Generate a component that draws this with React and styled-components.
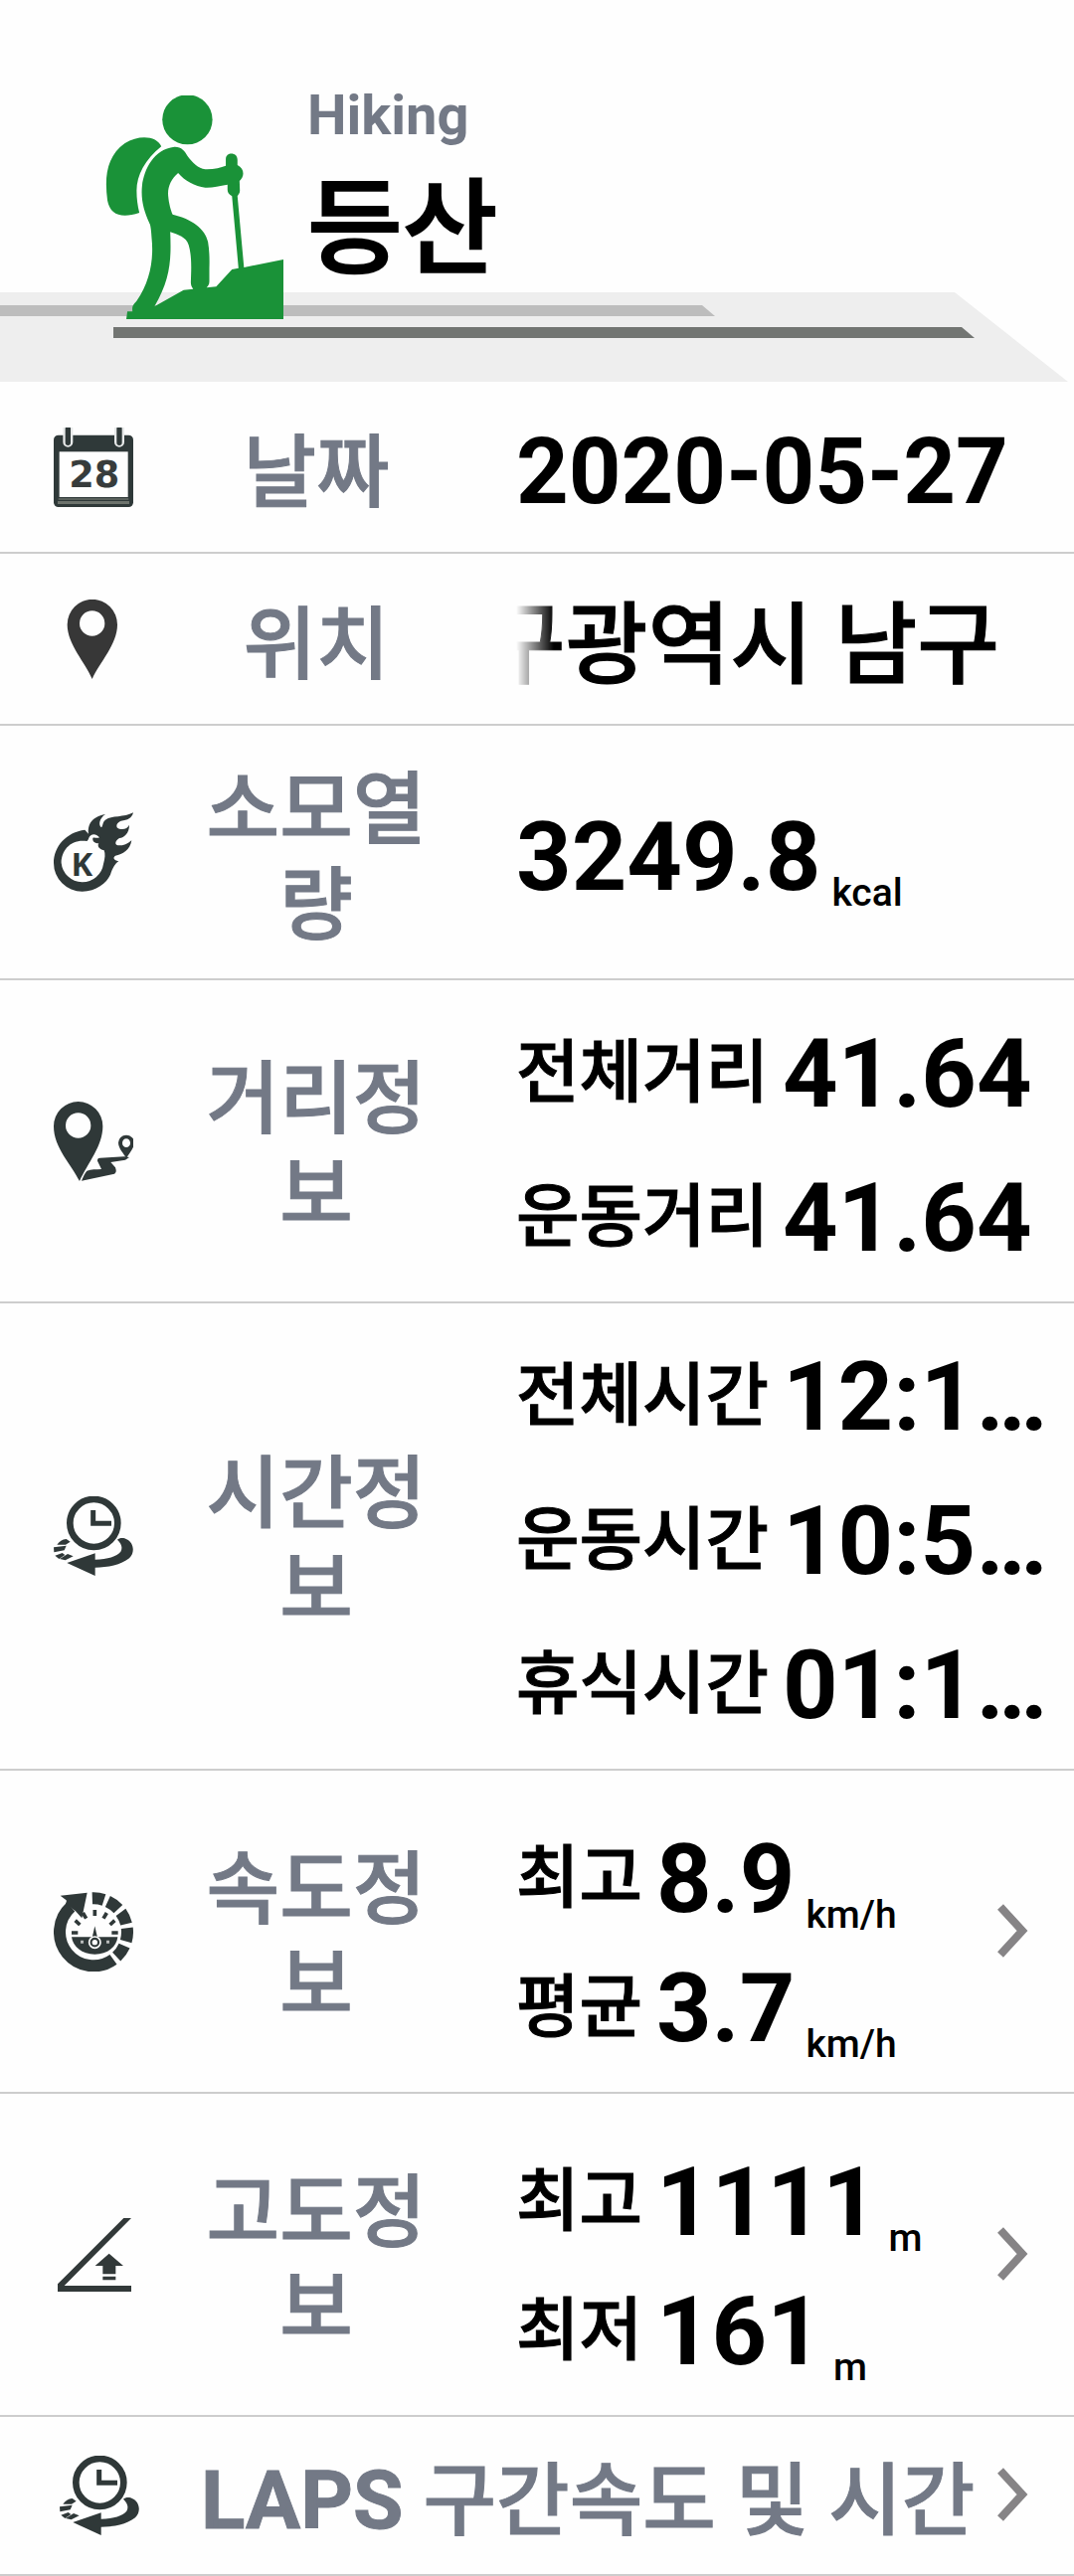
import React from 'react'
import styled, { createGlobalStyle } from 'styled-components'

const GlobalStyle = createGlobalStyle`
  * {
    box-sizing: border-box;
  }
  body {
    margin: 0;
    background: #fefefe;
    color: #000;
    font-family: Roboto, 'Noto Sans CJK KR', sans-serif;
  }
`;

// ---------- icons ----------

const HikerIcon = () => (
  <svg width='179' height='225' viewBox='309 108 519 675' preserveAspectRatio='none' fill='#1a9238' aria-hidden='true'>
    <ellipse cx='548' cy='181' rx='73' ry='75' />
    <path d='M472 262C425 300 400 350 400 395C400 420 403 440 408 462C355 480 323 468 315 425C305 350 315 290 365 253C410 224 460 232 472 262Z' />
    <path
      fillRule='evenodd'
      d='M510 263C530 262 540 275 548 290C562 310 580 328 600 331C625 332 645 325 660 320V300C660 278 694 278 694 302V318C715 330 715 352 700 366L701 395C701 403 697 405 694 412L713 627L828 603V783H370L373 760H388C385 740 395 735 400 728C440 670 450 600 444 540C443 520 441 500 438 495C420 455 412 420 416 380C422 330 450 270 510 263Z
        M521 342C500 360 490 385 492 410C494 435 500 455 505 467C560 480 600 510 608 550C612 575 613 600 612 630V670C612 680 607 684 604 688L632 685L678 633L697 629L678 412C668 405 665 400 665 392V377C640 382 620 387 600 386C570 383 540 365 521 342Z
        M498 520C501 600 500 660 452 745L537 695L565 692C560 685 558 680 558 672C560 620 560 590 552 560C545 535 520 528 498 520Z'
    />
  </svg>
);

const CalendarIcon = () => (
  <svg width='80' height='80' viewBox='0 0 240 240' aria-hidden='true'>
    <rect x='0' y='23' width='240' height='217' rx='14' fill='#2f3939' />
    <rect x='17' y='73' width='207' height='137' fill='#fefefe' />
    <rect x='14' y='214' width='212' height='4' fill='#6d736d' />
    <rect x='12' y='222' width='216' height='9' fill='#6d736d' />
    <path d='M28-10V44a15 15 0 0 0 30 0V-10ZM183-10V44a15 15 0 0 0 30 0V-10Z' fill='#e8eaea' />
    <path d='M43 4V46M198 4V46' stroke='#2f3939' strokeWidth='16' strokeLinecap='round' />
    <text x='122' y='179' textAnchor='middle' fontFamily='DejaVu Sans' fontWeight='700' fontSize='110' fill='#373c3c'>28</text>
  </svg>
);

const PinIcon = () => (
  <svg width='80' height='80' viewBox='0 0 240 240' fill='#373737' aria-hidden='true'>
    <path fillRule='evenodd' d='M116 240C95 190 41 135 41 76A75 76 0 0 1 192 76C192 135 139 190 116 240ZM116 34a38 38 0 1 0 0 76a38 38 0 1 0 0-76Z' />
  </svg>
);

const CalorieIcon = () => (
  <svg width='80' height='80' viewBox='72 112 240 240' fill='#2f3838' aria-hidden='true'>
    <path
      fillRule='evenodd'
      d='M166 165C110 172 72 215 72 265A86 86 0 0 0 158 351C200 350 232 325 243 300C250 280 256 268 268 260C252 256 250 248 258 243C280 240 303 225 307 197C298 204 288 213 270 212C255 212 255 200 270 190C285 188 300 175 300 150C295 160 285 165 270 162C256 158 262 142 275 138C295 136 308 130 312 113C285 128 245 122 230 134C218 142 222 152 216 158C206 150 210 130 228 118C185 126 174 150 177 177Z
        M172 199C125 192 95 225 95 265A64 64 0 0 0 222 268C227 250 228 238 224 227C207 224 203 212 208 206C197 206 188 200 190 190C193 186 202 192 210 188C200 176 190 177 184 182C176 188 178 196 172 199Z'
    />
    <text x='157' y='303' textAnchor='middle' fontFamily='Noto Sans' fontWeight='700' fontSize='98'>K</text>
  </svg>
);

const RouteIcon = () => (
  <svg width='80' height='80' viewBox='72 141 240 240' fill='#2f3838' aria-hidden='true'>
    <path fillRule='evenodd' d='M150 381C125 330 72 280 72 215A74 74 0 0 1 220 215C220 275 175 325 150 381ZM146 175a38 38 0 1 0 0 76a38 38 0 1 0 0-76Z' />
    <path fillRule='evenodd' d='M291 313C284 298 267 283 267 265A24 23 0 0 1 315 265C315 283 298 298 291 313ZM291 253a12 13 0 1 0 0 26a12 13 0 1 0 0-26Z' />
    <path d='M156 380C160 370 165 358 172 350C185 344 200 347 216 345L204 320Q203 311 212 311L285 307L300 309L288 317L244 324L258 340Q266 360 248 361Z' />
  </svg>
);

const TimeIcon = () => (
  <svg width='80' height='80' viewBox='72 165 240 240' fill='#2f3838' aria-hidden='true'>
    <circle cx='193' cy='246' r='72' fill='none' stroke='#2f3838' strokeWidth='20' />
    <path d='M191 207V247H246' fill='none' stroke='#2f3838' strokeWidth='15' />
    <path d='M264 296C270 290 284 289 292 295C314 305 318 335 300 352C275 372 235 380 197 380V405L112 366L197 337V356C235 354 262 347 274 332C281 320 276 307 264 296Z' />
    <path d='M82 311Q92 296 110 294L122 302L108 311ZM72 319L110 314L104 328L73 334ZM76 344L98 336L106 342L88 354ZM90 354L114 339L131 346L107 358Z' />
  </svg>
);

// arc on the dial ring, degrees clockwise from the top
const dialArc = (from, to) => {
  const point = (deg) => {
    const rad = (deg * Math.PI) / 180;
    return `${192 + 102 * Math.sin(rad)} ${276 - 102 * Math.cos(rad)}`;
  };
  return `M${point(from)}A102 102 0 ${to - from > 180 ? 1 : 0} 1 ${point(to)}`;
};

const dialSegments = [[-2, 18], [25, 47], [54, 76], [83, 106], [114, 137], [144, 318]];

const SpeedIcon = () => (
  <svg width='80' height='80' viewBox='72 155 240 240' fill='#2f3838' aria-hidden='true'>
    {dialSegments.map(([from, to]) => (
      <path key={from} d={dialArc(from, to)} fill='none' stroke='#2f3838' strokeWidth='36' />
    ))}
    <path d='M92 166L173 157L157 234L138 213L108 190Q112 183 110 180Z' />
    <path d='M126 291H265C262 320 235 343 196 343C157 343 130 320 126 291Z' />
    <path
      d='M196 209V227M160 218L170 235M232 218L222 235M137 241L151 254M256 241L242 254M126 278H145M247 278H266'
      stroke='#2f3838'
      strokeWidth='11'
    />
    <path d='M196 258L207 306H185Z' />
    <circle cx='196' cy='307' r='17' stroke='#fefefe' strokeWidth='5' />
    <circle cx='196' cy='307' r='8' fill='#fefefe' />
    <path d='M153 306H162M231 306H240' stroke='#b9bcbc' strokeWidth='9' />
  </svg>
);

const AltitudeIcon = () => (
  <svg width='80' height='80' viewBox='72 114 240 240' fill='#323939' aria-hidden='true'>
    <path d='M84 345V322L283 123H306L104 327H306V345ZM239 230L282 267H259V292H220V267H197ZM220 299H259V310H220Z' />
  </svg>
);

const Chevron = () => (
  <svg width='32' height='56' viewBox='0 0 32 56' fill='none' aria-hidden='true'>
    <path d='M4 3L26 27L4 51' stroke='#868486' strokeWidth='8' />
  </svg>
);

// ---------- layout ----------

const Header = styled.header`
  display: grid;
  height: 384px;
`;

const Band = styled.svg`
  grid-area: 1 / 1;
  align-self: end;
  display: block;
  width: 100%;
  height: 90px;
`;

const Activity = styled.div`
  grid-area: 1 / 1;
  display: flex;
  align-items: flex-start;
  gap: 24px;
  padding: 82px 0 0 106px;
  z-index: 1;

  svg {
    margin-top: 14px;
  }
`;

const Titles = styled.div`
  display: flex;
  flex-direction: column;
  gap: 6px;
`;

const SubTitle = styled.p`
  margin: 0;
  color: #737986;
  font-size: 56px;
  font-weight: 700;
  line-height: 68px;
`;

const Title = styled.h1`
  margin: 0;
  font-size: 104px;
  font-weight: 500;
  line-height: 152px;
  -webkit-text-stroke: 2px currentColor;
`;

const Row = styled.section`
  display: grid;
  grid-template-columns: ${({ $wide }) => ($wide ? '200px minmax(0, 1fr) auto' : '188px 260px minmax(0, 1fr) auto')};
  align-items: center;
  min-height: ${({ $height }) => $height}px;
  border-bottom: 2px solid #cdcdcd;
  color: inherit;
  text-decoration: none;
`;

const IconCell = styled.div`
  display: flex;
  justify-content: center;
`;

const Label = styled.h2`
  margin: 0;
  padding: ${({ $wide }) => ($wide ? '10px 0 0 2px' : '12px 8px 0')};
  color: #737986;
  font-size: 80px;
  font-weight: 500;
  line-height: 96px;
  text-align: ${({ $wide }) => ($wide ? 'left' : 'center')};
  word-break: break-all;
  white-space: ${({ $wide }) => ($wide ? 'nowrap' : 'normal')};
  -webkit-text-stroke: 1px currentColor;

  b {
    font-size: 82px;
    font-weight: 700;
  }
`;

const Values = styled.div`
  padding: ${({ $low }) => ($low ? 24 : 10)}px 0 0 71px;
`;

const Line = styled.div`
  display: flex;
  align-items: center;
  height: ${({ $tight }) => ($tight ? 130 : 145)}px;
  white-space: nowrap;
`;

const Name = styled.span`
  margin-right: 14px;
  font-size: 69px;
  font-weight: 500;
  line-height: 96px;
  -webkit-text-stroke: 1px currentColor;
`;

const Value = styled.span`
  font-size: ${({ $small }) => ($small ? 92 : 97)}px;
  font-weight: 700;
  line-height: 116px;
`;

const Unit = styled.span`
  margin-left: 11px;
  padding-top: 72px;
  font-size: 39px;
  font-weight: 500;
  line-height: 48px;
`;

const Marquee = styled.div`
  display: flex;
  justify-content: flex-end;
  margin-right: 75px;
  padding-top: 4px;
  overflow: hidden;
  font-size: 90px;
  font-weight: 500;
  line-height: 136px;
  white-space: nowrap;
  -webkit-text-stroke: 1px currentColor;
  mask-image: linear-gradient(to right, transparent, #000 38px);
`;

const Arrow = styled.div`
  display: flex;
  padding-right: 46px;
`;

const Stat = ({ name, value, unit, tight }) => (
  <Line $tight={tight}>
    {name && <Name>{name}</Name>}
    <Value>{value}</Value>
    {unit && <Unit>{unit}</Unit>}
  </Line>
);

const InfoRow = ({ icon, label, height, href, low, children }) => (
  <Row $height={height} as={href ? 'a' : 'section'} href={href}>
    <IconCell>{icon}</IconCell>
    <Label>{label}</Label>
    <Values $low={low}>{children}</Values>
    {href && <Arrow><Chevron /></Arrow>}
  </Row>
);

const App = () => {
  return (
    <>
      <GlobalStyle />
      <Header>
        <Band viewBox='0 0 1080 90' preserveAspectRatio='none' aria-hidden='true'>
          <path d='M0 0H960L1074 90H0Z' fill='#eeeeee' />
          <path d='M0 13H706L719 24H0Z' fill='#bdbdbd' />
          <path d='M114 35H967L980 46H114Z' fill='#727572' />
        </Band>
        <Activity>
          <HikerIcon />
          <Titles>
            <SubTitle>Hiking</SubTitle>
            <Title>등산</Title>
          </Titles>
        </Activity>
      </Header>
      <main>
        <InfoRow icon={<CalendarIcon />} label='날짜' height={173}>
          <Value $small>2020-05-27</Value>
        </InfoRow>
        <InfoRow icon={<PinIcon />} label='위치' height={173}>
          <Marquee><span>대구광역시 남구</span></Marquee>
        </InfoRow>
        <InfoRow icon={<CalorieIcon />} label='소모열량' height={256}>
          <Stat value='3249.8' unit='kcal' />
        </InfoRow>
        <InfoRow icon={<RouteIcon />} label='거리정보' height={325}>
          <Stat name='전체거리' value='41.64' />
          <Stat name='운동거리' value='41.64' />
        </InfoRow>
        <InfoRow icon={<TimeIcon />} label='시간정보' height={470}>
          <Stat name='전체시간' value='12:1…' />
          <Stat name='운동시간' value='10:5…' />
          <Stat name='휴식시간' value='01:1…' />
        </InfoRow>
        <InfoRow icon={<SpeedIcon />} label='속도정보' height={325} href='#speed' low>
          <Stat tight name='최고' value='8.9' unit='km/h' />
          <Stat tight name='평균' value='3.7' unit='km/h' />
        </InfoRow>
        <InfoRow icon={<AltitudeIcon />} label='고도정보' height={325} href='#altitude' low>
          <Stat tight name='최고' value='1111' unit='m' />
          <Stat tight name='최저' value='161' unit='m' />
        </InfoRow>
        <Row as='a' href='#laps' $height={160} $wide>
          <IconCell><TimeIcon /></IconCell>
          <Label $wide><b>LAPS</b> 구간속도 및 시간</Label>
          <Arrow><Chevron /></Arrow>
        </Row>
      </main>
    </>
  )
}

export default App
